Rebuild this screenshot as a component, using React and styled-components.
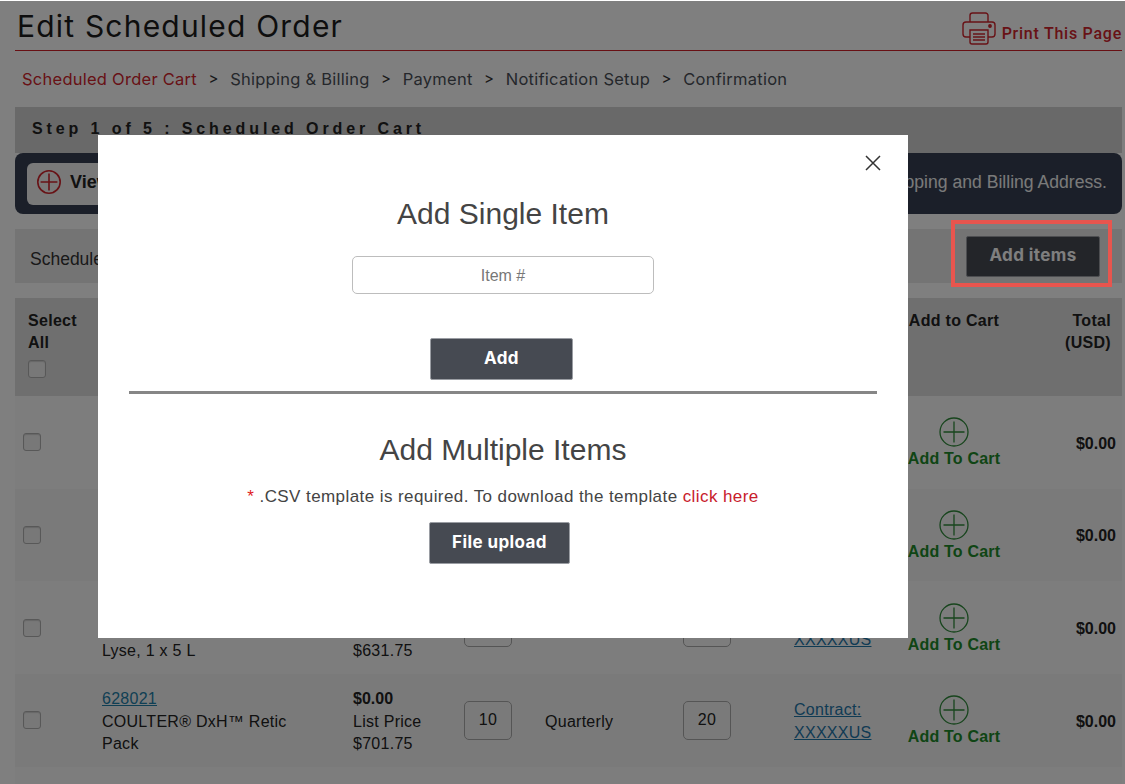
import React from "react";
import styled, { createGlobalStyle } from "styled-components";

const Global = createGlobalStyle`
  html, body { margin: 0; padding: 0; background: #fff; }
  body { font-family: "Liberation Sans", Arial, sans-serif; color: #222; }
  * { box-sizing: border-box; }
`;

const Viewport = styled.div`
  position: relative;
  width: 1125px;
  height: 784px;
  overflow: hidden;
`;
const Page = styled.div`
  padding: 0 3px 0 15px;
`;
const TitleBar = styled.header`
  height: 51px;
  display: flex;
  justify-content: space-between;
  align-items: flex-start;
  border-bottom: 1px solid #d02028;
`;
const Title = styled.h1`
  margin: 7px 0 0 2px;
  font: 400 30px/38px Inter, sans-serif;
  letter-spacing: 1.2px;
  color: #1c1c1c;
`;
const PrintLink = styled.a`
  display: flex;
  align-items: flex-end;
  gap: 6px;
  margin-top: 12px;
  font: 500 16px/22px Roboto, sans-serif;
  letter-spacing: 0.75px;
  color: #d0242c;
  white-space: nowrap;
`;
const Crumbs = styled.nav`
  height: 56px;
  display: flex;
  align-items: center;
  padding-left: 7px;
  font: 400 16.5px/20px Inter, sans-serif;
  letter-spacing: 0.25px;
  color: #4a4f57;
`;
const Crumb = styled.span`
  color: ${(p) => (p.$active ? "#d0242c" : "inherit")};
`;
const CrumbSep = styled.span`
  margin: 0 11.5px;
  color: #333;
  font-size: 15px;
`;
const StepBand = styled.div`
  height: 46px;
  background: #d2d2d2;
  padding: 12px 17px 0;
  font: 700 16px/20px "Liberation Sans", sans-serif;
  letter-spacing: 3.9px;
  color: #222;
  white-space: nowrap;
`;
const Banner = styled.div`
  height: 61px;
  background: #363e52;
  border-radius: 8px;
  display: flex;
  justify-content: space-between;
  align-items: center;
  padding: 0 15px 3px 12px;
`;
const BannerButton = styled.div`
  display: flex;
  align-items: center;
  gap: 9px;
  height: 42px;
  margin-top: 3px;
  padding: 0 10px 3px;
  background: #f2f2f2;
  border-radius: 6px;
  font: 700 18px/20px "Liberation Sans", sans-serif;
  color: #222;
`;
const BannerText = styled.div`
  font: 400 17.6px/20px "Liberation Sans", sans-serif;
  color: #f4f4f4;
`;
const ScheduleBand = styled.div`
  height: 54px;
  margin-top: 15px;
  background: #e9e9e9;
  display: flex;
  justify-content: space-between;
  align-items: center;
  padding: 0 22px 0 15px;
  font: 400 17.5px/20px "Liberation Sans", sans-serif;
  color: #333;
`;
const BandLabel = styled.span`
  padding-top: 5px;
`;
const DarkButton = styled.button`
  display: block;
  flex-shrink: 0;
  width: ${(p) => p.$w}px;
  height: ${(p) => p.$h || 42}px;
  margin: ${(p) => p.$m || "0"};
  background: #464a52;
  color: #fff;
  border: 1px solid #9a9da3;
  border-radius: 2px;
  font: 700 17px/20px Inter, sans-serif;
  letter-spacing: 0.4px;
  padding: 0 0 2px;
`;
const columns = "87px 251px 111px 81px 138px 111px 114px 92px 1fr";
const HeadRow = styled.div`
  display: grid;
  grid-template-columns: ${columns};
  height: 98px;
  margin-top: 15px;
  background: #dedede;
  padding-top: 12px;
  font: 700 16px/22px "Liberation Sans", sans-serif;
  color: #222;
`;
const HeadCell = styled.div`
  padding-left: ${(p) => p.$left || 0}px;
  padding-right: ${(p) => p.$right || 0}px;
  text-align: ${(p) => p.$align || "left"};
  letter-spacing: 0.3px;
`;
const Check = styled.span`
  display: block;
  width: 18px;
  height: 18px;
  border-radius: 3px;
  background: #f0f0f0;
  border: 1px solid #b0b0b0;
  box-shadow: inset 0 1px 1px rgba(0, 0, 0, 0.15);
  margin-top: ${(p) => p.$top || 0}px;
`;
const Row = styled.div`
  display: grid;
  grid-template-columns: ${columns};
  height: 92.67px;
  align-items: center;
  background: ${(p) => (p.$alt ? "#f5f5f5" : "#fbfbfb")};
  font: 400 16px/22.5px "Liberation Sans", sans-serif;
  letter-spacing: 0.27px;
  color: #222;
`;
const CheckCell = styled.div`
  padding-left: 8px;
`;
const TextCell = styled.div`
  padding-top: 3px;
`;
const ItemCell = styled(TextCell)`
  max-width: 200px;
`;
const ItemLink = styled.a`
  display: block;
  color: #1f7fa8;
  text-decoration: underline;
`;
const Strong = styled.div`
  font-weight: 700;
  letter-spacing: 0;
`;
const QtyBox = styled.div`
  width: 48px;
  height: 39px;
  border: 1px solid #aaa;
  border-radius: 5px;
  display: flex;
  align-items: center;
  justify-content: center;
`;
const ContractLink = styled.a`
  display: block;
  color: #1f76a8;
  text-decoration: underline;
`;
const AddCell = styled.div`
  display: flex;
  flex-direction: column;
  align-items: center;
  gap: 2px;
  padding-top: 2px;
  font-weight: 700;
  color: #1f8a2a;
  line-height: 20px;
  white-space: nowrap;
  letter-spacing: 0.2px;
`;
const TotalCell = styled(TextCell)`
  font-weight: 700;
  letter-spacing: 0;
  text-align: right;
  padding-right: 6px;
`;
const Overlay = styled.div`
  position: absolute;
  inset: 1px 0 0 0;
  background: rgba(0, 0, 0, 0.5);
`;
const Highlight = styled.div`
  position: absolute;
  left: 951px;
  top: 220px;
  width: 161px;
  height: 67px;
  border: 4px solid #e8554e;
`;
const Modal = styled.div`
  position: absolute;
  left: 98px;
  top: 135px;
  width: 810px;
  height: 503px;
  background: #fff;
  padding: 0 31px;
  display: flex;
  flex-direction: column;
  align-items: center;
`;
const Close = styled.button`
  position: absolute;
  top: 19px;
  right: 26px;
  width: 18px;
  height: 18px;
  padding: 0;
  border: 0;
  background: none;
  color: #333;
`;
const ModalTitle = styled.h2`
  margin: ${(p) => p.$top}px 0 0;
  font: 400 30px/36px "Liberation Sans", sans-serif;
  color: #444;
`;
const ItemInput = styled.input`
  display: block;
  flex-shrink: 0;
  width: 302px;
  height: 38px;
  margin-top: 24px;
  padding: 2px 0 0;
  border: 1px solid #bdbdbd;
  border-radius: 5px;
  text-align: center;
  font: 400 16px "Liberation Sans", sans-serif;
  &::placeholder { color: #777; opacity: 1; }
`;
const Divider = styled.hr`
  flex-shrink: 0;
  width: 100%;
  height: 3px;
  margin: 11px 0 0;
  border: 0;
  background: #868686;
`;
const Note = styled.p`
  margin: 19px 0 0;
  font: 400 17px/20px "Liberation Sans", sans-serif;
  letter-spacing: 0.42px;
  color: #444;
`;
const Star = styled.span`
  color: #e01a22;
`;
const TemplateLink = styled.a`
  color: #c8202c;
`;

const PlusCircle = ({ size, color, width = 1.3 }) => (
  <svg width={size} height={size} viewBox="0 0 30 30" fill="none" stroke={color} strokeWidth={width}>
    <circle cx="15" cy="15" r="14" />
    <path d="M15 4.5v21M4.5 15h21" />
  </svg>
);

const Printer = () => (
  <svg width="34" height="33" viewBox="0 0 34 33" fill="none" stroke="#d0242c" strokeWidth="1.4">
    <path d="M8 10V3.5A2.5 2.5 0 0 1 10.5 1h13A2.5 2.5 0 0 1 26 3.5V10" />
    <path d="M8 25H4a3 3 0 0 1-3-3V13a3 3 0 0 1 3-3h26a3 3 0 0 1 3 3v9a3 3 0 0 1-3 3h-4" />
    <path d="M8 18h18v12a2 2 0 0 1-2 2H10a2 2 0 0 1-2-2z" />
    <path d="M11 22h12M11 25h12M11 28h12" />
    <circle cx="28" cy="14" r="1.2" fill="#d0242c" />
  </svg>
);

const rows = [
  { id: "628019", name: "COULTER® DxH™ Diluent, 10 L", price: "$431.75" },
  { id: "628020", name: "COULTER® DxH™ Cleaner, 10 L", price: "$512.75" },
  { id: "628022", name: "COULTER® DxH™ Cell Lyse, 1 x 5 L", price: "$631.75" },
  { id: "628021", name: "COULTER® DxH™ Retic Pack", price: "$701.75" },
  { id: "628023", name: "COULTER® DxH™ Cell Pack", price: "$701.75" },
];

export default function App() {
  return (
    <Viewport>
      <Global />
      <Page>
        <TitleBar>
          <Title>Edit Scheduled Order</Title>
          <PrintLink>
            <Printer />
            Print This Page
          </PrintLink>
        </TitleBar>
        <Crumbs>
          <Crumb $active>Scheduled Order Cart</Crumb>
          <CrumbSep>&gt;</CrumbSep>
          <Crumb>Shipping &amp; Billing</Crumb>
          <CrumbSep>&gt;</CrumbSep>
          <Crumb>Payment</Crumb>
          <CrumbSep>&gt;</CrumbSep>
          <Crumb>Notification Setup</Crumb>
          <CrumbSep>&gt;</CrumbSep>
          <Crumb>Confirmation</Crumb>
        </Crumbs>
        <StepBand>Step 1 of 5 : Scheduled Order Cart</StepBand>
        <Banner>
          <BannerButton>
            <PlusCircle size={24} color="#d0242c" width={2} />
            View Cart Details
          </BannerButton>
          <BannerText>Please confirm your Shipping and Billing Address.</BannerText>
        </Banner>
        <ScheduleBand>
          <BandLabel>Scheduled Order Items</BandLabel>
          <DarkButton $w={134} $h={41}>Add items</DarkButton>
        </ScheduleBand>
        <HeadRow>
          <HeadCell $left={13}>
            Select All
            <Check $top={6} />
          </HeadCell>
          <HeadCell>Item</HeadCell>
          <HeadCell>Price</HeadCell>
          <HeadCell>Qty</HeadCell>
          <HeadCell>Frequency</HeadCell>
          <HeadCell>Duration</HeadCell>
          <HeadCell>Contract</HeadCell>
          <HeadCell $align="center">Add to Cart</HeadCell>
          <HeadCell $align="right" $left={60} $right={11}>Total (USD)</HeadCell>
        </HeadRow>
        {rows.map((r, i) => (
          <Row key={r.id} $alt={i % 2 === 1}>
            <CheckCell><Check /></CheckCell>
            <ItemCell>
              <ItemLink>{r.id}</ItemLink>
              {r.name}
            </ItemCell>
            <TextCell>
              <Strong>$0.00</Strong>
              List Price
              <div>{r.price}</div>
            </TextCell>
            <QtyBox>10</QtyBox>
            <TextCell>Quarterly</TextCell>
            <QtyBox>20</QtyBox>
            <TextCell>
              <ContractLink>Contract:</ContractLink>
              <ContractLink>XXXXXUS</ContractLink>
            </TextCell>
            <AddCell>
              <PlusCircle size={30} color="#2f8a3a" />
              Add To Cart
            </AddCell>
            <TotalCell>$0.00</TotalCell>
          </Row>
        ))}
      </Page>
      <Overlay />
      <Highlight />
      <Modal>
        <Close aria-label="Close">
          <svg width="18" height="18" viewBox="0 0 18 18" stroke="currentColor" strokeWidth="1.5" fill="none">
            <path d="M2 2l14 14M16 2L2 16" />
          </svg>
        </Close>
        <ModalTitle $top={61}>Add Single Item</ModalTitle>
        <ItemInput placeholder="Item #" />
        <DarkButton $w={143} $m="44px 3px 0 0">Add</DarkButton>
        <Divider />
        <ModalTitle $top={38}>Add Multiple Items</ModalTitle>
        <Note>
          <Star>*</Star> .CSV template is required. To download the template{" "}
          <TemplateLink>click here</TemplateLink>
        </Note>
        <DarkButton $w={141} $m="15px 7px 0 0">File upload</DarkButton>
      </Modal>
    </Viewport>
  );
}
